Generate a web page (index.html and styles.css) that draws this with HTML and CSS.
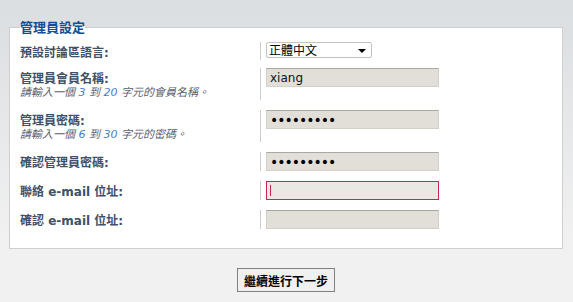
FILE: index.html
```html
<!DOCTYPE html>
<html lang="zh-Hant">
<head>
    <meta charset="UTF-8">
    <title>管理員設定</title>
    <link rel="stylesheet" href="styles.css">
</head>
<body>

<form class="install" action="#">
    <fieldset class="panel">
        <legend>管理員設定</legend>

        <dl class="row">
            <dt><label for="lang">預設討論區語言:</label></dt>
            <dd>
                <span class="select-wrap">
                    <select id="lang" name="default_lang">
                        <option>正體中文</option>
                    </select>
                </span>
            </dd>
        </dl>

        <dl class="row">
            <dt>
                <label for="admin_name">管理員會員名稱:</label>
                <span class="explain">請輸入一個 <em>3</em> 到 <em>20</em> 字元的會員名稱。</span>
            </dt>
            <dd><input type="text" id="admin_name" name="admin_name" value="xiang"></dd>
        </dl>

        <dl class="row">
            <dt>
                <label for="admin_pass1">管理員密碼:</label>
                <span class="explain">請輸入一個 <em>6</em> 到 <em>30</em> 字元的密碼。</span>
            </dt>
            <dd><input type="password" id="admin_pass1" name="admin_pass1" value="123456789"></dd>
        </dl>

        <dl class="row">
            <dt><label for="admin_pass2">確認管理員密碼:</label></dt>
            <dd><input type="password" id="admin_pass2" name="admin_pass2" value="123456789"></dd>
        </dl>

        <dl class="row">
            <dt><label for="board_email1">聯絡 e-mail 位址:</label></dt>
            <dd>
                <span class="field-wrap">
                    <input type="text" id="board_email1" name="board_email1" class="active">
                    <span class="caret"></span>
                </span>
            </dd>
        </dl>

        <dl class="row">
            <dt><label for="board_email2">確認 e-mail 位址:</label></dt>
            <dd><input type="text" id="board_email2" name="board_email2"></dd>
        </dl>
    </fieldset>

    <div class="submit-buttons">
        <input type="submit" class="button" value="繼續進行下一步">
    </div>
</form>

</body>
</html>
```

FILE: styles.css
```css
* {
    box-sizing: border-box;
}

html {
    height: 100%;
}

body {
    margin: 0;
    min-height: 100%;
    padding: 19px 10px 0 9px;
    font-family: "DejaVu Sans", "Noto Sans CJK TC", sans-serif;
    font-size: 12px;
    color: #425067;
    background: linear-gradient(to bottom, #dcdfe2 0, #dde0e3 30px, #f1f1f1 240px, #f1f1f1 100%);
}

.panel {
    margin: 0;
    padding: 7px 10px 19px 10px;
    border: 1px solid #cfcfcf;
    background-color: #fff;
    min-width: 0;
}

.panel legend {
    padding: 0;
    font-family: "Noto Sans CJK TC", sans-serif;
    font-size: 13px;
    line-height: 16px;
    font-weight: bold;
    color: #115098;
}

/* each setting is one row: label on the left, field on the right */
.row {
    display: grid;
    grid-template-columns: 240px 1fr;
    margin: 0 0 10px 0;
}

.row:last-child {
    margin-bottom: 0;
}

.row:first-of-type {
    margin-bottom: 8px;
}

.row dt {
    padding-top: 4px;
    line-height: 14px;
}

.row dt label {
    display: block;
    font-weight: bold;
    color: #425067;
}

.row dd {
    margin: 0;
    padding-left: 5px;
    border-left: 1px solid #cccccc;
}

.explain {
    display: block;
    font-size: 11px;
    font-style: italic;
    color: #5a6070;
}

.explain em {
    color: #4a7fc0;
}

input[type="text"],
input[type="password"] {
    display: block;
    width: 173px;
    height: 19px;
    margin: 0;
    padding: 0 3px;
    border: 1px solid #d3d0c8;
    border-top-color: #aaa8a2;
    background-color: #e2dfd9;
    font-family: "DejaVu Sans", sans-serif;
    font-size: 12px;
    color: #111;
    outline: none;
}

input[type="password"] {
    font-size: 14px;
    letter-spacing: -1px;
    color: #000;
}

input.active,
input:focus {
    border: 1px solid #c8265b;
    background-color: #e9e8e2;
    caret-color: #c8265b;
}

/* text cursor drawn over the active field */
.field-wrap {
    position: relative;
    display: block;
}

.caret {
    position: absolute;
    left: 4px;
    top: 4px;
    width: 1px;
    height: 11px;
    background-color: #c8265b;
}

/* select with its own drawn arrow */
.select-wrap {
    position: relative;
    display: inline-block;
}

.select-wrap select {
    display: block;
    appearance: none;
    -webkit-appearance: none;
    width: 106px;
    height: 16px;
    margin: 0;
    padding: 0 0 0 2px;
    border: 1px solid #c2c2c2;
    border-radius: 2px;
    background-color: #fff;
    font-family: "Noto Sans CJK TC", sans-serif;
    font-size: 12px;
    line-height: 14px;
    color: #000;
}

.select-wrap::after {
    content: "";
    position: absolute;
    right: 6px;
    top: 7px;
    border-left: 4px solid transparent;
    border-right: 4px solid transparent;
    border-top: 4px solid #000;
    pointer-events: none;
}

.submit-buttons {
    display: flex;
    justify-content: center;
    margin-top: 19px;
}

.button {
    height: 24px;
    padding: 0 6px;
    border: 1px solid #808080;
    background-color: #f0f0f0;
    font-family: "Noto Sans CJK TC", sans-serif;
    font-size: 12px;
    font-weight: bold;
    color: #000;
    cursor: pointer;
}
```
